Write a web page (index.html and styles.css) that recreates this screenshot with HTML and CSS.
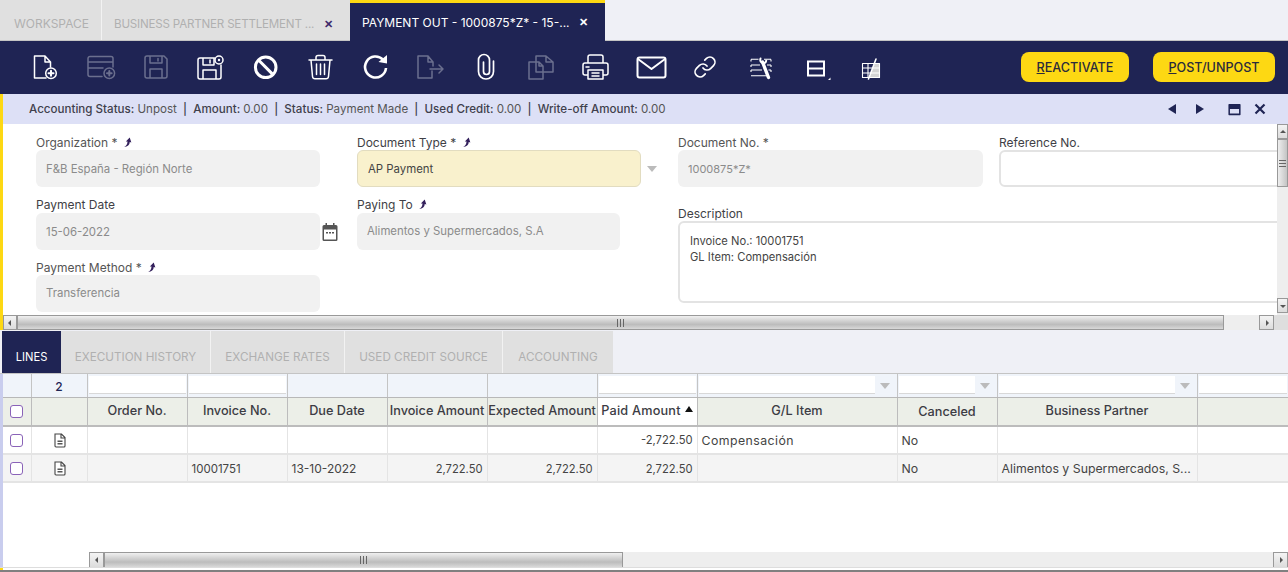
FILE: index.html
```html
<!DOCTYPE html>
<html lang="en">

<head>
    <meta charset="UTF-8">
    <meta name="viewport" content="width=device-width, initial-scale=1.0">
    <title>Payment Out</title>
    <link rel="stylesheet" href="styles.css">
</head>

<body>
    <div class="main-tabs">
        <div class="main-tab tab-workspace">WORKSPACE</div>
        <div class="main-tab tab-partner"><span class="tab-text">BUSINESS PARTNER SETTLEMENT ...</span><span class="tab-close">&#10005;</span></div>
        <div class="main-tab tab-active"><span class="tab-text">PAYMENT OUT - 1000875*Z* - 15-...</span><span class="tab-close">&#10005;</span></div>
    </div>

    <div class="toolbar">
        <div class="tool-icons">
            <span class="tool"><svg viewBox="0 0 33 33"><path d="M17 27H5.500V5H16l5.500 6v5M16 5v6h5.500"/><circle cx="22" cy="22.300" r="5.300"/><path class="thick" d="M19.500 22.300h5M22 19.800v5"/></svg></span>
            <span class="tool off"><svg viewBox="0 0 33 33"><path d="M18 25.500H6a2 2 0 0 1-2-2v-16a2 2 0 0 1 2-2h21a2 2 0 0 1 2 2V16M4 11h25M4 17h15"/><circle cx="25.300" cy="22.300" r="5.300"/><path class="thick" d="M23 22.300h4.600M25.300 20v4.600"/></svg></span>
            <span class="tool off"><svg viewBox="0 0 33 33"><path d="M8 5h17l3 3v17a2 2 0 0 1-2 2H8a2 2 0 0 1-2-2V7a2 2 0 0 1 2-2zM11 5v7h12V5M19 7.500v2.500M11 27v-9h12v9"/></svg></span>
            <span class="tool"><svg viewBox="0 0 33 33"><path d="M20.500 7H6a2 2 0 0 0-2 2v17a2 2 0 0 0 2 2h19a2 2 0 0 0 2-2V14M9 7v7h11V7M16 9v3M9 28v-9h13v9"/><circle cx="25" cy="9" r="4"/><circle class="dot" cx="25" cy="9" r="1.200"/></svg></span>
            <span class="tool"><svg viewBox="0 0 33 33"><circle class="heavy" cx="16.700" cy="16.300" r="10.300"/><path class="heavy" d="M9.500 9l14.500 14.600"/></svg></span>
            <span class="tool"><svg viewBox="0 0 33 33"><path d="M5 9h23M12 9V6.500a2 2 0 0 1 2-2h5a2 2 0 0 1 2 2V9M7 9l1.500 16.500a2.500 2.500 0 0 0 2.500 2.200h11a2.500 2.500 0 0 0 2.500-2.200L26 9M12.500 13v10.500M16.500 13v10.500M20.500 13v10.500"/></svg></span>
            <span class="tool"><svg viewBox="0 0 33 33"><path class="heavy refresh" d="M24 8.600A10.500 10.500 0 1 0 27 17"/><path class="solid" d="M19.500 11l8.500 1.500 0-8.500z"/></svg></span>
            <span class="tool off"><svg viewBox="0 0 33 33"><path d="M18 20V27H4V5h10l5 6v4M14 5v6h5M16 18h13M25 14l4 4-4 4"/></svg></span>
            <span class="tool"><svg viewBox="0 0 33 33"><path class="clip" d="M14.500 11V20.500a3 3 0 0 0 6 0V9a5.500 5.500 0 0 0-11 0V20.500a7.500 7.500 0 0 0 15 0V10"/></svg></span>
            <span class="tool off"><svg viewBox="0 0 33 33"><path d="M12 11H5v17h14v-7M12 11h3l4 4v6h-7zM12 11V5h10l7 6v10H19M22 5v6h7M15 11v4h4"/></svg></span>
            <span class="tool"><svg viewBox="0 0 33 33"><path d="M9 12V6a2 2 0 0 1 2-2h11a2 2 0 0 1 2 2v6M9 24H6a2 2 0 0 1-2-2V14a2 2 0 0 1 2-2h21a2 2 0 0 1 2 2v8a2 2 0 0 1-2 2h-3M9 19h15v9H9zM7 16h3M13 22h7M13 25h7"/></svg></span>
            <span class="tool"><svg viewBox="0 0 33 33"><rect class="wide" x="3.500" y="6.500" width="28" height="20" rx="2"/><path class="wide" d="M4 8l13.500 10L31 8"/></svg></span>
            <span class="tool"><svg viewBox="0 0 33 33"><g transform="translate(4 4)"><path class="clip" d="M10 13a5 5 0 0 0 7.540.54l3-3a5 5 0 0 0-7.070-7.070l-1.720 1.710"/><path class="clip" d="M14 11a5 5 0 0 0-7.540-.54l-3 3a5 5 0 0 0 7.070 7.070l1.710-1.710"/></g></svg></span>
            <span class="tool"><svg viewBox="0 0 33 33"><path class="fine" d="M7 8.300h7.500M7 14h9M7 19h11M7 24.700h17M20 8.300h7M23 14h4M24.500 19h2.500M7 10.500v-2M7 16v-2M27 10.500v-2M27 16v-2M7 21v-2M27 21v-2"/><path class="tool-handle" d="M18.500 11l6 15.500"/><path class="wide" d="M16.500 7.500c-.8 2.500.6 4.500 3 4.700 1.600 0 2.500-1 2.700-2.500"/></svg></span>
            <span class="tool"><svg viewBox="0 0 33 33"><rect class="wide square" x="9" y="10.500" width="16" height="14"/><path class="wide" d="M9 17.500h16"/><path class="solid" d="M29 29h2.500v-2.500z"/></svg></span>
            <span class="tool"><svg viewBox="0 0 33 33"><path class="solid shade" d="M21 12h4.500v14.500H15z"/><rect class="fine" x="8.500" y="12.500" width="17" height="14"/><path class="fine" d="M8.500 17h17M8.500 22h17M14 12.500v14"/><path class="slash" d="M22 8l-7.500 20"/></svg></span>
        </div>
        <div class="tool-buttons">
            <button class="action-btn btn-reactivate" type="button"><u>R</u>EACTIVATE</button>
            <button class="action-btn btn-post" type="button"><u>P</u>OST/UNPOST</button>
        </div>
    </div>

    <div class="header-section">
        <div class="status-bar">
            <div class="status-text">Accounting Status: <span>Unpost</span> &nbsp;|&nbsp; Amount: <span>0.00</span> &nbsp;|&nbsp; Status: <span>Payment Made</span> &nbsp;|&nbsp; Used Credit: <span>0.00</span> &nbsp;|&nbsp; Write-off Amount: <span>0.00</span></div>
            <div class="status-icons">
                <svg class="status-arrow" viewBox="0 0 10 12"><path d="M9 1v10L1 6z"/></svg>
                <svg class="status-arrow" viewBox="0 0 10 12"><path d="M1 1v10l8-5z"/></svg>
                <svg class="status-max" viewBox="0 0 12 12"><path d="M1 1h10a.6.6 0 0 1 .6.6v9a.6.6 0 0 1-.6.6H1a.6.6 0 0 1-.6-.6v-9A.6.6 0 0 1 1 1zm.8 4.500v4.300h8.400V5.500z"/></svg>
                <svg class="status-close" viewBox="0 0 12 12"><path d="M1.500 1.500l9 9M10.500 1.500l-9 9"/></svg>
            </div>
        </div>

        <div class="form-wrap">
            <div class="form-grid">
                <div class="field">
                    <div class="field-label">Organization * <svg class="jump" viewBox="0 0 10 10"><path d="M2 9c2-1 3-3 3-5L3.500 4 7 0.500 8.500 5 7 4.500C7 7 5 9 2 9z"/></svg></div>
                    <div class="field-box readonly drop">F&amp;B España - Región Norte</div>
                </div>
                <div class="field">
                    <div class="field-label dark">Document Type * <svg class="jump" viewBox="0 0 10 10"><path d="M2 9c2-1 3-3 3-5L3.500 4 7 0.500 8.500 5 7 4.500C7 7 5 9 2 9z"/></svg></div>
                    <div class="field-row">
                        <div class="field-box required drop">AP Payment</div>
                        <span class="drop-arrow"></span>
                    </div>
                </div>
                <div class="field">
                    <div class="field-label">Document No. *</div>
                    <div class="field-box readonly doc-no">1000875*Z*</div>
                </div>
                <div class="field">
                    <div class="field-label dark">Reference No.</div>
                    <div class="field-box editable ref-box"></div>
                </div>

                <div class="field">
                    <div class="field-label dark tall">Payment Date</div>
                    <div class="field-row">
                        <div class="field-box readonly">15-06-2022</div>
                        <svg class="calendar" viewBox="0 0 16 18"><path d="M3.500 0h1.500v2h6V0h1.500v2H14a1.500 1.500 0 0 1 1.500 1.500v13A1.500 1.500 0 0 1 14 18H2a1.500 1.500 0 0 1-1.500-1.500v-13A1.500 1.500 0 0 1 2 2h1.500zM2 6.500v10h12v-10zM4 9h2v1.500H4zm3 0h2v1.500H7zm3 0h2v1.500h-2z"/></svg>
                    </div>
                </div>
                <div class="field">
                    <div class="field-label dark tall">Paying To <svg class="jump" viewBox="0 0 10 10"><path d="M2 9c2-1 3-3 3-5L3.500 4 7 0.500 8.500 5 7 4.500C7 7 5 9 2 9z"/></svg></div>
                    <div class="field-box readonly paying-box lift">Alimentos y Supermercados, S.A</div>
                </div>
                <div class="field field-desc">
                    <div class="field-label dark">Description</div>
                    <div class="field-box editable desc-box">Invoice No.: 10001751<br>GL Item: Compensación</div>
                </div>

                <div class="field">
                    <div class="field-label">Payment Method * <svg class="jump" viewBox="0 0 10 10"><path d="M2 9c2-1 3-3 3-5L3.500 4 7 0.500 8.500 5 7 4.500C7 7 5 9 2 9z"/></svg></div>
                    <div class="field-box readonly lift">Transferencia</div>
                </div>
            </div>

            <div class="vscroll">
                <span class="sb-btn sb-up"></span>
                <span class="sb-vthumb"><span class="sb-vgrip"></span></span>
                <span class="sb-vtrack"></span>
                <span class="sb-btn sb-down"></span>
            </div>
        </div>

        <div class="hscroll form-hscroll">
            <span class="sb-btn sb-left"></span>
            <span class="sb-thumb"><span class="sb-grip"></span></span>
            <span class="sb-track"></span>
            <span class="sb-btn sb-right"></span>
            <span class="sb-corner"></span>
        </div>
    </div>

    <div class="sub-tabs">
        <div class="sub-tab sub-active">LINES</div>
        <div class="sub-tab sub-history">EXECUTION HISTORY</div>
        <div class="sub-tab sub-rates">EXCHANGE RATES</div>
        <div class="sub-tab sub-credit">USED CREDIT SOURCE</div>
        <div class="sub-tab sub-accounting">ACCOUNTING</div>
    </div>

    <div class="grid-section">
        <table class="lines">
            <colgroup>
                <col class="c-check"><col class="c-open"><col class="c-std"><col class="c-std"><col class="c-std"><col class="c-std"><col class="c-wide"><col class="c-std"><col class="c-big"><col class="c-std"><col class="c-big"><col class="c-rest">
            </colgroup>
            <tr class="filter-row">
                <td></td>
                <td class="count">2</td>
                <td><span class="filter-input"></span></td>
                <td><span class="filter-input"></span></td>
                <td></td>
                <td></td>
                <td></td>
                <td><span class="filter-input"></span></td>
                <td><span class="filter-input has-drop"></span><span class="drop-arrow small"></span></td>
                <td><span class="filter-input has-drop"></span><span class="drop-arrow small"></span></td>
                <td><span class="filter-input has-drop"></span><span class="drop-arrow small"></span></td>
                <td><span class="filter-input"></span></td>
            </tr>
            <tr class="head-row">
                <th><span class="check"></span></th>
                <th></th>
                <th>Order No.</th>
                <th>Invoice No.</th>
                <th>Due Date</th>
                <th>Invoice Amount</th>
                <th>Expected Amount</th>
                <th class="sorted">Paid Amount<span class="sort-up"></span></th>
                <th>G/L Item</th>
                <th class="low">Canceled</th>
                <th>Business Partner</th>
                <th></th>
            </tr>
            <tr class="data-row">
                <td class="mid"><span class="check"></span></td>
                <td class="mid"><svg class="row-doc" viewBox="0 0 12 15"><path class="row-doc-line" d="M1 1h6.500L11 4.500V13a1 1 0 0 1-1 1H2a1 1 0 0 1-1-1zM7 1v4h4"/><path class="row-doc-fill" d="M3.500 7.500h5V9h-5zm0 2.500h5v1.500h-5z"/></svg></td>
                <td></td>
                <td></td>
                <td></td>
                <td></td>
                <td></td>
                <td class="num">-2,722.50</td>
                <td class="gl-item">Compensación</td>
                <td>No</td>
                <td></td>
                <td></td>
            </tr>
            <tr class="data-row odd">
                <td class="mid"><span class="check"></span></td>
                <td class="mid"><svg class="row-doc" viewBox="0 0 12 15"><path class="row-doc-line" d="M1 1h6.500L11 4.500V13a1 1 0 0 1-1 1H2a1 1 0 0 1-1-1zM7 1v4h4"/><path class="row-doc-fill" d="M3.500 7.500h5V9h-5zm0 2.500h5v1.500h-5z"/></svg></td>
                <td></td>
                <td class="cell-id">10001751</td>
                <td class="cell-date">13-10-2022</td>
                <td class="num">2,722.50</td>
                <td class="num">2,722.50</td>
                <td class="num">2,722.50</td>
                <td></td>
                <td>No</td>
                <td>Alimentos y Supermercados, S...</td>
                <td></td>
            </tr>
        </table>
        <div class="grid-empty"></div>
        <div class="hscroll grid-hscroll">
            <span class="sb-btn sb-left"></span>
            <span class="sb-thumb"><span class="sb-grip"></span></span>
            <span class="sb-track"></span>
            <span class="sb-btn sb-right"></span>
        </div>
    </div>

    <div class="page-bottom"><span class="bottom-mark"></span></div>
</body>

</html>
```

FILE: styles.css
```css
* {
    box-sizing: border-box;
}

html,
body {
    margin: 0;
    height: 572px;
    overflow: hidden;
}

body {
    width: 1288px;
    background-color: #fff;
    font-family: 'Inter', sans-serif;
    font-size: 11.4px;
    color: #444;
}

/* main tabs */
.main-tabs {
    display: flex;
    height: 41px;
    background-color: #eff0f6;
    border-bottom: 1px solid #c4c4c4;
}

.main-tab {
    display: flex;
    align-items: center;
    font-size: 12px;
    white-space: nowrap;
    background-color: #e0e0e0;
    color: #b0b0b0;
}

.tab-workspace {
    width: 102px;
    padding: 6px 0 0 14px;
    border-right: 1px solid #f2f2f2;
}

.tab-partner {
    width: 248px;
    padding: 7px 0 0 12px;
}

.tab-partner .tab-text {
    width: 210px;
    font-size: 11.6px;
    letter-spacing: -0.2px;
}

.tab-active {
    width: 255px;
    padding: 0 0 0 12px;
    height: 41px;
    background-color: #1f2454;
    border-top: 3px solid #fdd813;
    color: #fff;
}

.tab-active .tab-text {
    width: 217px;
}

.tab-close {
    font-size: 11px;
    font-weight: bold;
    color: #3d2a6b;
}

.tab-active .tab-close {
    color: #fff;
}

/* toolbar */
.toolbar {
    display: flex;
    align-items: center;
    justify-content: space-between;
    height: 53px;
    padding: 0 13px 0 18px;
    background-color: #1f2454;
}

.tool-icons {
    display: flex;
}

.tool {
    display: flex;
    justify-content: center;
    width: 55px;
}

.tool svg {
    width: 33px;
    height: 33px;
    fill: none;
    stroke: #fff;
    stroke-width: 1.5;
    stroke-linejoin: round;
    stroke-linecap: round;
}

.tool.off svg {
    stroke: #6b6f8e;
}

.tool .thick,
.tool .wide {
    stroke-width: 2;
}

.tool .square {
    stroke-linejoin: miter;
}

.tool .clip {
    stroke-width: 1.7;
}

.tool .fine {
    stroke-width: 1.1;
    stroke-linecap: butt;
}

.tool .heavy {
    stroke-width: 3;
    stroke-linecap: butt;
}

.tool .refresh {
    stroke-width: 2.6;
}

.tool .tool-handle {
    stroke-width: 3.4;
}

.tool .slash {
    stroke-width: 1.6;
}

.tool .solid {
    fill: #fff;
    stroke: none;
}

.tool .shade {
    fill: #d4d4d4;
}

.tool .dot {
    fill: #fff;
    stroke: none;
}

.tool-buttons {
    display: flex;
    gap: 24px;
    position: relative;
    top: -0.5px;
}

.action-btn {
    height: 30px;
    border: none;
    border-radius: 8px;
    background-color: #fdd813;
    color: #2a2a3c;
    font-family: 'Inter', sans-serif;
    font-size: 12.6px;
    font-weight: 500;
    padding: 0;
    cursor: pointer;
}

.btn-reactivate {
    width: 108px;
}

.btn-post {
    width: 122px;
}

/* header section */
.header-section {
    height: 236px;
    border-left: 3px solid #fdd813;
}

.status-bar {
    display: flex;
    align-items: center;
    justify-content: space-between;
    height: 30px;
    padding: 0 22px 0 26px;
    background-color: #dde0f6;
    color: #3f3f4c;
}

.status-text {
    font-size: 11.6px;
    font-weight: 500;
    white-space: pre;
}

.status-text span {
    font-weight: 400;
    color: #555;
}

.status-icons {
    display: flex;
    align-items: center;
}

.status-icons svg {
    fill: #1f2454;
}

.status-arrow {
    width: 10px;
    height: 12px;
    margin-right: 18px;
}

.status-max {
    width: 13px;
    height: 13px;
    margin-left: 5px;
    margin-right: 13px;
}

.status-icons .status-close {
    width: 12px;
    height: 12px;
    fill: none;
    stroke: #1f2454;
    stroke-width: 2.2;
}

.form-wrap {
    display: flex;
    height: 191px;
}

.form-grid {
    flex: 1;
    display: grid;
    grid-template-columns: 321px 321px 321px 275px;
    grid-template-rows: 62px 63px 62px;
    padding: 11px 0 0 33px;
    overflow: hidden;
}

.field-label {
    height: 15px;
    line-height: 15px;
    font-size: 12px;
    color: #555;
    white-space: nowrap;
}

.field-label.dark {
    color: #3f3f46;
}

.field-label.tall {
    height: 16px;
}

.field-row {
    display: flex;
    align-items: center;
}

.field-box {
    display: flex;
    align-items: center;
    height: 37px;
    width: 284px;
    flex-shrink: 0;
    padding-left: 10px;
    border-radius: 6px;
    white-space: nowrap;
}

.drop {
    padding-top: 1px;
}

.lift {
    padding-bottom: 1px;
}

.readonly {
    background-color: #f1f1f1;
    color: #8b8b8b;
}

.required {
    background-color: #f9f1cd;
    border: 1px solid #e2dcc0;
    color: #444;
    padding-left: 10px;
}

.doc-no {
    width: 305px;
    font-size: 11px;
}

.paying-box {
    width: 263px;
}

.editable {
    background-color: #fff;
    border: 2px solid #e3e3e3;
    color: #444;
}

.ref-box {
    width: 300px;
}

.field-desc {
    grid-column: 3 / span 2;
    grid-row: 2 / span 2;
    padding-top: 9px;
}

.desc-box {
    display: block;
    width: 630px;
    height: 82px;
    padding: 10px 10px;
    font-size: 11.2px;
    line-height: 16px;
}

.drop-arrow {
    width: 0;
    height: 0;
    margin-left: 6px;
    border-left: 5px solid transparent;
    border-right: 5px solid transparent;
    border-top: 6px solid #bbb;
}

.calendar {
    width: 16px;
    height: 18px;
    margin-left: 2px;
    fill: #555;
}

.jump {
    width: 11px;
    height: 11px;
    margin-left: 1px;
    vertical-align: -1px;
    fill: #33205c;
}

/* scrollbars */
.vscroll {
    display: flex;
    flex-direction: column;
    width: 11px;
    flex-shrink: 0;
    background-color: #eee;
}

.sb-btn {
    display: block;
    flex-shrink: 0;
    background: linear-gradient(#f4f4f4, #dcdcdc);
    border: 1px solid #999;
    position: relative;
}

.sb-btn::after {
    content: "";
    position: absolute;
    left: 50%;
    top: 50%;
    width: 0;
    height: 0;
    border: 3px solid transparent;
}

.sb-up,
.sb-down {
    height: 15px;
}

.sb-down {
    margin-bottom: 2px;
}

.sb-up::after {
    border-bottom-color: #555;
    margin: -5px 0 0 -3px;
}

.sb-down::after {
    border-top-color: #555;
    margin: -1px 0 0 -3px;
}

.sb-vthumb {
    display: flex;
    align-items: center;
    justify-content: center;
    height: 48px;
    border: 1px solid #999;
    background: linear-gradient(90deg, #eee, #c4c4c4);
}

.sb-vgrip {
    width: 7px;
    height: 7px;
    background: repeating-linear-gradient(#666 0 1px, transparent 1px 3px);
}

.sb-vtrack {
    flex: 1;
}

.hscroll {
    display: flex;
    height: 15px;
    background-color: #eee;
}

.sb-left,
.sb-right {
    width: 15px;
}

.sb-left::after {
    border-right-color: #555;
    margin: -3px 0 0 -5px;
}

.sb-right::after {
    border-left-color: #555;
    margin: -3px 0 0 -1px;
}

.sb-thumb {
    display: flex;
    align-items: center;
    justify-content: center;
    border: 1px solid #999;
    background: linear-gradient(#f0f0f0, #bcbcbc 65%, #d8d8d8);
}

.sb-grip {
    width: 7px;
    height: 8px;
    background: repeating-linear-gradient(90deg, #666 0 1px, transparent 1px 3px);
}

.sb-track {
    flex: 1;
}

.form-hscroll .sb-left {
    width: 14px;
}

.form-hscroll .sb-thumb {
    width: 1207px;
}

.sb-corner {
    display: block;
    width: 14px;
    background-color: #dedede;
}

.grid-hscroll {
    margin-left: 86px;
    height: 16px;
}

.grid-hscroll .sb-thumb {
    width: 519px;
}

/* lines tabs */
.sub-tabs {
    display: flex;
    height: 44px;
    padding: 1px 0 0 2px;
    background-color: #eff0f6;
    border-bottom: 1px solid #c4c4c4;
}

.sub-tab {
    display: flex;
    align-items: center;
    justify-content: center;
    padding-top: 10px;
    font-size: 11.7px;
    white-space: nowrap;
    background-color: #e0e0e0;
    color: #b0b0b0;
    border-right: 1px solid #f2f2f2;
}

.sub-active {
    width: 59px;
    background-color: #1f2454;
    color: #fff;
    border-right: none;
    font-size: 11.2px;
}

.sub-history {
    width: 150px;
}

.sub-rates {
    width: 134px;
}

.sub-credit {
    width: 158px;
}

.sub-accounting {
    width: 110px;
    border-right: none;
}

/* lines grid */
.grid-section {
    height: 193px;
    border-left: 3px solid #c9cdee;
}

.lines {
    width: 1285px;
    table-layout: fixed;
    border-collapse: collapse;
}

.c-check {
    width: 28px;
}

.c-open {
    width: 56px;
}

.c-std {
    width: 100px;
}

.c-wide {
    width: 110px;
}

.c-big {
    width: 200px;
}

.c-rest {
    width: 91px;
}

.lines td,
.lines th {
    padding: 0;
    overflow: hidden;
    white-space: nowrap;
}

.filter-row td {
    height: 23px;
    background-color: #f0f4fa;
    border-right: 1px solid #c4c4c4;
    border-bottom: 1px solid #b8b8b8;
    font-size: 0;
    padding: 2px 1px 1px 1px;
    vertical-align: top;
}

.filter-row .count {
    text-align: center;
    vertical-align: middle;
    font-size: 12px;
    font-weight: 500;
    color: #1f2454;
    padding: 3px 0 0 0;
}

.filter-input {
    display: inline-block;
    width: 100%;
    height: 18px;
    background-color: #fff;
    border-bottom: 1px solid #d8d8d8;
}

.filter-input.has-drop {
    width: calc(100% - 21px);
    vertical-align: top;
}

.drop-arrow.small {
    display: inline-block;
    vertical-align: top;
    margin: 7px 0 0 5px;
}

.head-row th {
    height: 29px;
    padding-bottom: 2px;
    font-weight: 500;
    font-size: 12.7px;
    color: #3c3c44;
    background-color: #ecefe8;
    border-right: 1px solid #bcbcbc;
    border-bottom: 2px solid #bcbcbc;
    text-align: center;
}

.head-row th.sorted {
    background-color: #fff;
    letter-spacing: 0.2px;
}

.head-row th.low {
    padding-top: 3px;
}

.sort-up {
    display: inline-block;
    width: 0;
    height: 0;
    margin: 0 0 3px 4px;
    border-left: 4px solid transparent;
    border-right: 4px solid transparent;
    border-bottom: 6px solid #111;
}

.data-row td {
    height: 28px;
    padding: 0 4px;
    font-size: 12.3px;
    border-right: 1px solid #e4e4e4;
    border-bottom: 2px solid #e4e4e4;
    color: #444;
}

.data-row.odd td {
    background-color: #f4f4f4;
}

.lines .num {
    text-align: right;
    font-size: 11.2px;
}

.data-row.odd .num,
.data-row.odd .cell-id {
    padding-top: 1px;
}

.data-row .gl-item {
    letter-spacing: 0.45px;
}

.data-row .cell-id {
    font-size: 11.5px;
}

.data-row .cell-date {
    font-size: 12px;
}

.lines .mid {
    text-align: center;
    padding: 0;
    font-size: 0;
}

.check {
    display: inline-block;
    width: 13px;
    height: 13px;
    border: 1px solid #8a63b8;
    border-radius: 3px;
    background-color: #fff;
    vertical-align: middle;
}

.row-doc {
    width: 12px;
    height: 15px;
    margin-left: 1px;
    vertical-align: middle;
}

.row-doc-line {
    fill: #fff;
    stroke: #444;
    stroke-width: 1.1;
}

.row-doc-fill {
    fill: #555;
}

.grid-empty {
    height: 69px;
}

.page-bottom {
    position: relative;
    height: 5px;
    border-top: 1px solid #ddd;
    background: linear-gradient(#fff 0 2px, #808080 2px);
}

.bottom-mark {
    position: absolute;
    left: 0;
    top: 0;
    width: 3px;
    height: 2px;
    background-color: #fdd813;
}
```
